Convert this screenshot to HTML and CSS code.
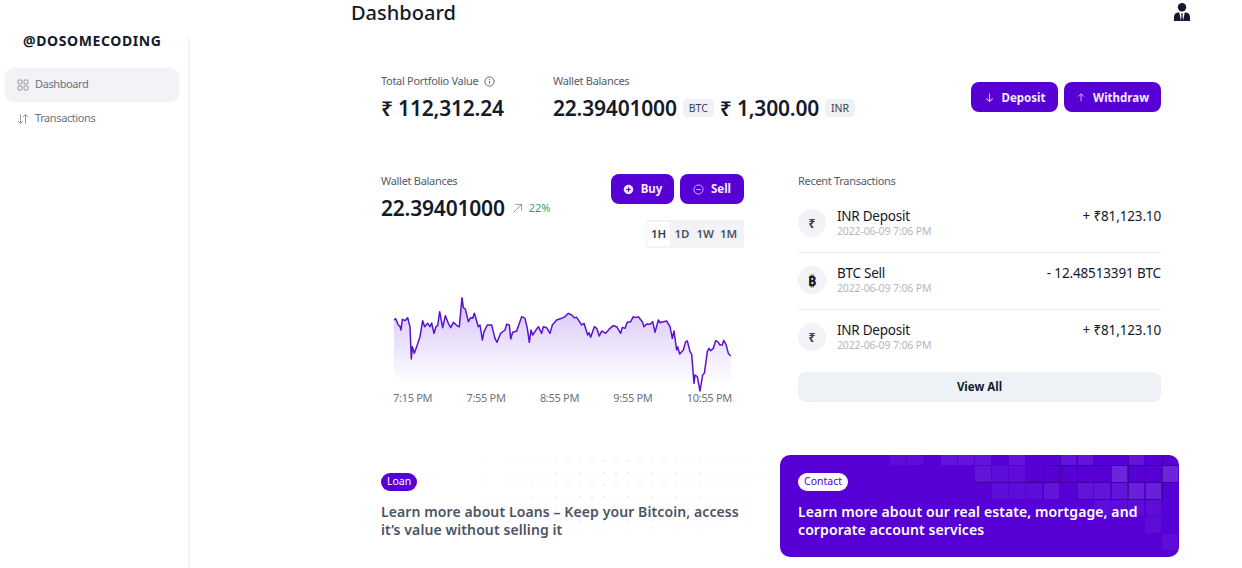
FILE: index.html
```html
<!DOCTYPE html>
<html lang="en">
<head>
    <meta charset="UTF-8">
    <meta name="viewport" content="width=device-width, initial-scale=1.0">
    <title>Dashboard</title>
    <link rel="stylesheet" href="styles.css">
</head>
<body>
    <div class="app">
        <aside class="sidebar">
            <div class="logo">@DOSOMECODING</div>
            <nav class="nav">
                <a class="nav-item active">
                    <svg class="nav-icon" viewBox="0 0 12 12" fill="none" stroke="currentColor" stroke-width="0.9"><rect x="1" y="1" width="4" height="4" rx="0.8"/><rect x="7" y="1" width="4" height="4" rx="0.8"/><rect x="1" y="7" width="4" height="4" rx="0.8"/><rect x="7" y="7" width="4" height="4" rx="0.8"/></svg>
                    <span>Dashboard</span>
                </a>
                <a class="nav-item">
                    <svg class="nav-icon" viewBox="0 0 12 12" fill="none" stroke="currentColor" stroke-width="0.9"><path d="M3.5 1.5v9M1 8l2.5 2.500L6 8M8.5 10.500v-9M6 4l2.500-2.500L11 4"/></svg>
                    <span>Transactions</span>
                </a>
            </nav>
        </aside>

        <main class="main">
            <header class="topbar">
                <h1>Dashboard</h1>
                <svg class="user-icon" viewBox="0 0 16 18" fill="#141a2b"><circle cx="8" cy="4.200" r="4.200"/><path d="M0 18v-4.200C0 11 2 9.700 5.200 9.300L7 18z"/><path d="M16 18v-4.200c0-2.800-2-4.100-5.200-4.500L9 18z"/><path d="M8 10l1 1.300-.5 1.200.6 5.500H6.900l.6-5.500-.5-1.200z"/></svg>
            </header>

            <div class="content">
                <section class="summary">
                    <div class="stat stat-total">
                        <div class="label">Total Portfolio Value
                            <svg class="info" viewBox="0 0 12 12" fill="none" stroke="currentColor"><circle cx="6" cy="6" r="5"/><path d="M6 5.400v3M6 3.400v1"/></svg>
                        </div>
                        <div class="value">₹ 112,312.24</div>
                    </div>
                    <div class="stat">
                        <div class="label">Wallet Balances</div>
                        <div class="value-row">
                            <span class="value">22.39401000</span><span class="chip">BTC</span>
                            <span class="value">₹ 1,300.00</span><span class="chip">INR</span>
                        </div>
                    </div>
                    <div class="actions">
                        <button class="btn btn-deposit">
                            <svg class="btn-icon" viewBox="0 0 12 12" fill="none" stroke="#d9b8ff" stroke-width="1.1"><path d="M6 1.500v9M2.500 7L6 10.500 9.500 7"/></svg>
                            Deposit
                        </button>
                        <button class="btn btn-withdraw">
                            <svg class="btn-icon" viewBox="0 0 12 12" fill="none" stroke="#d9b8ff" stroke-width="1.1"><path d="M6 10.500v-9M2.500 5L6 1.500 9.500 5"/></svg>
                            Withdraw
                        </button>
                    </div>
                </section>

                <section class="columns">
                    <div class="wallet">
                        <div class="wallet-head">
                            <div>
                                <div class="label">Wallet Balances</div>
                                <div class="wallet-value">
                                    <span class="value">22.39401000</span>
                                    <svg class="trend-icon" viewBox="0 0 12 12" fill="none" stroke="#5f9d84" stroke-width="0.9"><path d="M1.500 10.500l9-9M3.500 1.500h7v7"/></svg>
                                    <span class="trend">22%</span>
                                </div>
                            </div>
                            <div class="wallet-controls">
                                <div class="trade-btns">
                                    <button class="btn btn-buy">
                                        <svg class="btn-icon" viewBox="0 0 12 12"><circle cx="6" cy="6" r="5.200" fill="#efe6ff"/><path d="M6 3.500v5M3.500 6h5" stroke="#5600d6" stroke-width="1.100"/></svg>
                                        <span>Buy</span>
                                    </button>
                                    <button class="btn btn-sell">
                                        <svg class="btn-icon" viewBox="0 0 12 12" fill="none" stroke="#e6d8ff" stroke-width="0.9"><circle cx="6" cy="6" r="5"/><path d="M3.500 6h5"/></svg>
                                        <span>Sell</span>
                                    </button>
                                </div>
                                <div class="tabs">
                                    <span class="tab active">1H</span>
                                    <span class="tab">1D</span>
                                    <span class="tab">1W</span>
                                    <span class="tab">1M</span>
                                </div>
                            </div>
                        </div>
                        <svg class="chart" viewBox="42 0 1014 300" preserveAspectRatio="none">
                            <defs>
                                <linearGradient id="area" x1="0" y1="0" x2="0" y2="1">
                                    <stop offset="0" stop-color="#c7aef3" stop-opacity="0.75"/>
                                    <stop offset="1" stop-color="#c7aef3" stop-opacity="0"/>
                                </linearGradient>
                            </defs>
                            <polygon fill="url(#area)" points="42,300 42,105 47,101 55,120 60,124 63,135 67,103 75,107 83,98 90,125 94,222 97,185 103,205 110,185 120,155 128,107 134,125 143,115 150,125 155,114 162,145 168,125 173,122 179,80 188,128 196,92 205,115 212,128 220,112 232,123 238,125 246,38 250,68 256,72 265,110 272,98 278,100 283,85 295,125 300,120 307,165 312,140 322,120 335,120 345,160 351,172 362,145 375,135 380,118 388,120 392,162 398,142 410,138 425,95 435,100 442,130 448,172 453,135 458,150 475,125 485,145 490,125 500,128 510,145 517,120 530,105 545,100 555,95 565,85 575,90 583,98 590,97 600,112 605,120 612,115 623,150 627,143 632,157 643,125 650,130 658,153 665,138 677,145 690,130 700,122 710,125 715,133 722,145 727,127 735,130 742,112 752,110 760,95 767,98 775,95 787,110 792,125 800,117 810,118 818,110 825,142 835,105 840,113 850,110 860,108 870,125 877,160 882,138 890,195 893,185 899,207 910,195 917,170 922,168 930,200 935,208 942,295 945,270 952,275 960,300 968,270 973,265 982,200 987,190 992,197 1000,190 1007,167 1013,170 1020,180 1027,180 1031,166 1038,178 1045,205 1052,213 1052,300"/>
                            <polyline fill="none" stroke="#5a12cf" stroke-width="4.500" stroke-linejoin="round" points="42,105 47,101 55,120 60,124 63,135 67,103 75,107 83,98 90,125 94,222 97,185 103,205 110,185 120,155 128,107 134,125 143,115 150,125 155,114 162,145 168,125 173,122 179,80 188,128 196,92 205,115 212,128 220,112 232,123 238,125 246,38 250,68 256,72 265,110 272,98 278,100 283,85 295,125 300,120 307,165 312,140 322,120 335,120 345,160 351,172 362,145 375,135 380,118 388,120 392,162 398,142 410,138 425,95 435,100 442,130 448,172 453,135 458,150 475,125 485,145 490,125 500,128 510,145 517,120 530,105 545,100 555,95 565,85 575,90 583,98 590,97 600,112 605,120 612,115 623,150 627,143 632,157 643,125 650,130 658,153 665,138 677,145 690,130 700,122 710,125 715,133 722,145 727,127 735,130 742,112 752,110 760,95 767,98 775,95 787,110 792,125 800,117 810,118 818,110 825,142 835,105 840,113 850,110 860,108 870,125 877,160 882,138 890,195 893,185 899,207 910,195 917,170 922,168 930,200 935,208 942,295 945,270 952,275 960,318 968,270 973,265 982,200 987,190 992,197 1000,190 1007,167 1013,170 1020,180 1027,180 1031,166 1038,178 1045,205 1052,213"/>
                        </svg>
                        <div class="chart-axis">
                            <span>7:15 PM</span>
                            <span>7:55 PM</span>
                            <span>8:55 PM</span>
                            <span>9:55 PM</span>
                            <span>10:55 PM</span>
                        </div>
                    </div>

                    <div class="recent">
                        <div class="label">Recent Transactions</div>
                        <ul class="tx-list">
                            <li class="tx">
                                <span class="tx-icon">₹</span>
                                <div class="tx-info">
                                    <div class="tx-name">INR Deposit</div>
                                    <div class="tx-date">2022-06-09 7:06 PM</div>
                                </div>
                                <div class="tx-amount">+ ₹81,123.10</div>
                            </li>
                            <li class="tx">
                                <span class="tx-icon tx-icon-btc">₿</span>
                                <div class="tx-info">
                                    <div class="tx-name">BTC Sell</div>
                                    <div class="tx-date">2022-06-09 7:06 PM</div>
                                </div>
                                <div class="tx-amount">- 12.48513391 BTC</div>
                            </li>
                            <li class="tx">
                                <span class="tx-icon">₹</span>
                                <div class="tx-info">
                                    <div class="tx-name">INR Deposit</div>
                                    <div class="tx-date">2022-06-09 7:06 PM</div>
                                </div>
                                <div class="tx-amount">+ ₹81,123.10</div>
                            </li>
                        </ul>
                        <button class="view-all"><span>View All</span></button>
                    </div>
                </section>
            </div>

            <section class="promos">
                <div class="promo promo-loan">
                    <span class="pill">Loan</span>
                    <p>Learn more about Loans – Keep your Bitcoin, access it’s value without selling it</p>
                </div>
                <div class="promo promo-contact">
                    <svg class="promo-squares" viewBox="0 0 399 102" fill="#ffffff" fill-opacity="0.08">
                        <g fill-opacity="0.05">
                            <rect x="110" y="-6" width="16" height="16"/><rect x="127" y="-6" width="16" height="16"/>
                            <rect x="212" y="11" width="16" height="16"/><rect x="229" y="11" width="16" height="16"/>
                            <rect x="212" y="28" width="16" height="16"/><rect x="229" y="28" width="16" height="16"/><rect x="246" y="28" width="16" height="16"/>
                            <rect x="314" y="45" width="16" height="16"/><rect x="331" y="45" width="16" height="16"/><rect x="348" y="45" width="16" height="16"/>
                            <rect x="365" y="45" width="16" height="16"/><rect x="365" y="62" width="16" height="16"/><rect x="382" y="79" width="16" height="16"/>
                        </g>
                        <rect x="161" y="-6" width="16" height="16"/><rect x="178" y="-6" width="16" height="16"/><rect x="195" y="-6" width="16" height="16"/><rect x="229" y="-6" width="16" height="16"/><rect x="280" y="-6" width="16" height="16"/><rect x="297" y="-6" width="16" height="16"/><rect x="348" y="-6" width="16" height="16"/>
                        <rect x="195" y="11" width="16" height="16"/><rect x="331" y="11" width="16" height="16" fill-opacity="0.14"/><rect x="382" y="11" width="16" height="16" fill-opacity="0.14"/>
                        <rect x="263" y="28" width="16" height="16"/><rect x="297" y="28" width="16" height="16"/><rect x="314" y="28" width="16" height="16"/><rect x="331" y="28" width="16" height="16"/><rect x="348" y="28" width="16" height="16" fill-opacity="0.12"/><rect x="365" y="28" width="16" height="16" fill-opacity="0.12"/>
                        <path d="M263 10.500h136M195 27.500h204M297 44.500h85M263.500 10v35M280.500 0v28M297.500 0v45M331.500 10v35M348.500 0v45M365.500 0v62M382.500 0v45" stroke="#2c0080" stroke-opacity="0.6" fill="none"/>
                    </svg>
                    <span class="pill pill-light">Contact</span>
                    <p>Learn more about our real estate, mortgage, and corporate account services</p>
                </div>
            </section>
        </main>
    </div>
</body>
</html>
```
FILE: styles.css
```css
* {
    box-sizing: border-box;
}
html, body {
    height: 100%;
}
body {
    margin: 0;
    font-family: "Noto Sans", Arial, sans-serif;
    color: #141a2b;
    background: #fff;
    overflow: hidden;
}
.app {
    display: flex;
    height: 568px;
}

/* sidebar */
.sidebar {
    width: 190px;
    flex-shrink: 0;
    margin-top: 38px;
    border-right: 2px solid #f3f3f6;
}
.logo {
    margin-top: -6px;
    padding-left: 23px;
    font-size: 14px;
    line-height: 18px;
    font-weight: 700;
    letter-spacing: 0.6px;
}
.nav {
    margin-top: 18px;
    padding: 0 9px 0 5px;
}
.nav-item {
    display: flex;
    align-items: center;
    gap: 6px;
    height: 34px;
    padding-left: 12px;
    border-radius: 9px;
    font-size: 11px;
    letter-spacing: -0.4px;
    color: #6b7280;
}
.nav-item span {
    padding-bottom: 3px;
}
.nav-item.active {
    background: #f2f2f7;
}
.nav-icon {
    width: 12px;
    height: 12px;
    color: #8b8f98;
}

/* main column */
.main {
    flex: 1;
    min-width: 0;
}
.topbar {
    display: flex;
    justify-content: space-between;
    height: 28px;
    padding: 0 52px 0 161px;
}
.topbar h1 {
    margin: 0;
    font-size: 20px;
    line-height: 26px;
    font-weight: 500;
}
.user-icon {
    width: 16px;
    height: 18px;
    margin-top: 3px;
}
.content {
    width: 780px;
    margin: 46px 0 0 191px;
}
.label {
    display: flex;
    align-items: center;
    gap: 5px;
    font-size: 11px;
    line-height: 14px;
    letter-spacing: -0.3px;
    color: #555c68;
}
.info {
    width: 11px;
    height: 11px;
    margin-left: 1px;
    stroke-width: 1;
}
.value {
    font-size: 21px;
    line-height: 30px;
    font-weight: 600;
    letter-spacing: -0.2px;
}
.stat-total .value {
    display: block;
}

/* top summary */
.summary {
    display: flex;
    height: 50px;
}
.stat .value {
    margin-top: 5px;
}
.stat-total {
    width: 172px;
}
.value-row {
    display: flex;
    align-items: center;
    gap: 6px;
}
.chip {
    margin-top: 5px;
    padding: 0 6px;
    height: 18px;
    border-radius: 4px;
    font-size: 10.500px;
    line-height: 18px;
    color: #374151;
    background: #eef2f7;
}
.actions {
    display: flex;
    gap: 6px;
    margin-left: auto;
    padding-top: 8px;
}
.btn {
    display: inline-flex;
    align-items: center;
    justify-content: center;
    gap: 7px;
    height: 30px;
    padding: 0 12px;
    border: none;
    border-radius: 8px;
    font-family: inherit;
    font-size: 11.500px;
    font-weight: 700;
    color: #f3ecff;
    background: #5600d6;
}
.btn-deposit {
    width: 87px;
}
.btn-withdraw {
    width: 97px;
}
.btn-icon {
    width: 11px;
    height: 11px;
}

/* wallet and transactions */
.columns {
    display: flex;
    justify-content: space-between;
    margin-top: 50px;
}
.wallet, .recent {
    width: 363px;
}
.wallet-head {
    display: flex;
    justify-content: space-between;
}
.wallet-value {
    display: flex;
    align-items: center;
    margin-top: 5px;
}
.trend-icon {
    width: 11px;
    height: 11px;
    margin-left: 7px;
}
.trend {
    margin: 0 0 1px 6px;
    font-size: 11px;
    color: #3f9a73;
}
.wallet-controls {
    display: flex;
    flex-direction: column;
    align-items: flex-end;
    gap: 16px;
}
.trade-btns {
    display: flex;
    gap: 6px;
}
.btn-buy {
    width: 63px;
    padding: 0;
}
.btn-sell {
    width: 64px;
    padding: 0;
}
.btn-buy span, .btn-sell span {
    padding-bottom: 2px;
}
.tabs {
    display: flex;
    align-items: center;
    width: 98px;
    height: 28px;
    padding: 2px 2px 2px 1px;
    background: #f2f2f7;
}
.tab {
    width: 23.300px;
    height: 24px;
    font-size: 11.500px;
    line-height: 23px;
    font-weight: 600;
    text-align: center;
    color: #4b5563;
}
.tab.active {
    background: #fff;
    color: #374151;
}
.chart {
    display: block;
    width: 338px;
    height: 100px;
    margin: 37px 0 0 13px;
    overflow: visible;
}
.chart-axis {
    display: flex;
    justify-content: space-between;
    margin: 5px 12px 0 12px;
    font-size: 11px;
    line-height: 16px;
    letter-spacing: -0.3px;
    color: #6b7280;
}
.tx-list {
    margin: 8px 0 0;
    padding: 0;
    list-style: none;
}
.tx {
    display: flex;
    height: 57px;
    padding-top: 12px;
    border-bottom: 1px solid #eceef1;
}
.tx:last-child {
    height: 56px;
    border-bottom: none;
}
.tx-icon {
    display: flex;
    align-items: center;
    justify-content: center;
    width: 28px;
    height: 28px;
    margin: 1px 11px 0 0;
    border-radius: 50%;
    font-size: 12px;
    font-weight: 700;
    color: #374151;
    background: #f2f2f7;
}
.tx-icon-btc {
    font-size: 15px;
    color: #141a2b;
}
.tx-info {
    flex: 1;
}
.tx-name {
    font-size: 13.500px;
    line-height: 16px;
    letter-spacing: -0.25px;
}
.tx-date {
    font-size: 10.500px;
    line-height: 14px;
    letter-spacing: -0.15px;
    color: #b4b8bf;
}
.tx-amount {
    font-size: 13.500px;
    line-height: 16px;
    letter-spacing: -0.15px;
}
.view-all {
    display: block;
    width: 100%;
    height: 30px;
    margin-top: 6px;
    border: none;
    border-radius: 8px;
    font-family: inherit;
    font-size: 11.500px;
    font-weight: 700;
    color: #141a2b;
    background: #eef2f6;
}
.view-all span {
    position: relative;
    top: -1px;
}

/* promo cards */
.promos {
    display: flex;
    gap: 18px;
    width: 816px;
    margin: 49px 0 0 173px;
}
.promo {
    position: relative;
    flex: 1;
    height: 102px;
    padding: 18px;
    overflow: hidden;
    border-radius: 10px;
}
.promo p {
    position: relative;
    margin: 12px 0 0;
    font-size: 14px;
    line-height: 18px;
    font-weight: 600;
    letter-spacing: 0.1px;
}
.promo-loan {
    color: #4b5563;
    background-image: radial-gradient(circle, #e9e9ee 1px, transparent 1.2px);
    background-size: 12px 12px;
    background-position: right -4px top 0;
}
.promo-loan::before {
    content: "";
    position: absolute;
    inset: 0;
    background:
        linear-gradient(to bottom, rgba(255, 255, 255, 0) 55%, #fff 88%),
        linear-gradient(110deg, #fff 22%, rgba(255, 255, 255, 0.2) 58%, rgba(255, 255, 255, 0.85) 100%);
}
.promo-contact {
    color: #fff;
    background: #5600d6;
}
.promo-squares {
    position: absolute;
    top: 0;
    left: 0;
    width: 399px;
    height: 102px;
}
.pill {
    position: relative;
    display: block;
    width: fit-content;
    height: 18px;
    padding: 0 6px;
    border-radius: 9px;
    font-size: 10.500px;
    line-height: 17px;
    color: #fff;
    background: #5600d6;
}
.pill-light {
    color: #5600d6;
    background: #fff;
}
```
